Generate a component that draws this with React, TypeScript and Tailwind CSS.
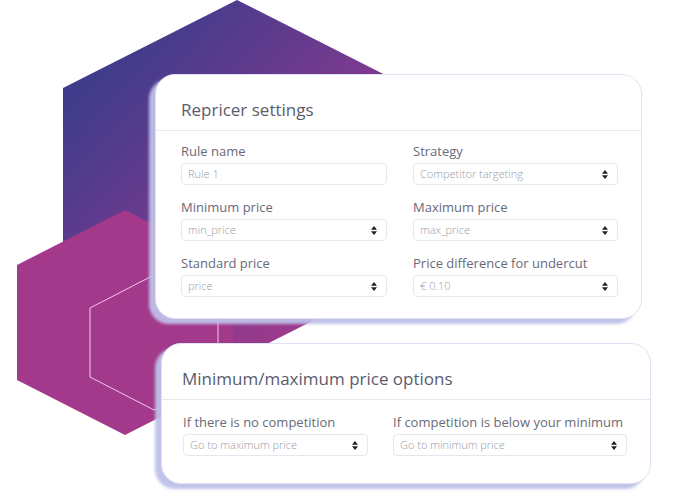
import React from 'react';

const FONT = { fontFamily: '"Open Sans", "DejaVu Sans", sans-serif' };

function Arrows() {
  return (
    <svg width="6" height="9" viewBox="0 0 6 9" className="shrink-0">
      <path d="M3 0 L6 3.8 L0 3.8 Z" fill="#1f1f24" />
      <path d="M3 9 L6 5.2 L0 5.2 Z" fill="#1f1f24" />
    </svg>
  );
}

function Field({ label, value, select = true }: { label: string; value: string; select?: boolean }) {
  return (
    <div className="flex flex-col">
      <span className="text-[13px] leading-4 text-[#6a6a78]">{label}</span>
      <div className="mt-[4px] h-[22px] rounded-[4px] border border-[#e6e6ee] flex items-center justify-between pl-[6px] pr-[9px]">
        <span className="text-[11px] font-light text-[#9a9aa6]">{value}</span>
        {select && <Arrows />}
      </div>
    </div>
  );
}

function Card({ title, className, headClass, children }: { title: string; className: string; headClass: string; children: React.ReactNode }) {
  return (
    <div className={`relative bg-white rounded-[20px] border border-[#e0e1f4] shadow-[-6px_5px_3px_rgba(190,193,232,0.95)] ${className}`}>
      <div className={`pt-[25px] pb-[10px] border-b border-[#e8e8ee] ${headClass}`}>
        <h2 className="text-[17px] leading-5 text-[#5b5b6c]">{title}</h2>
      </div>
      {children}
    </div>
  );
}

export default function App() {
  return (
    <div className="relative w-[690px] h-[500px] overflow-hidden bg-white" style={FONT}>
      {/* background hexagons */}
      <svg className="absolute inset-0" width="690" height="500" viewBox="0 0 690 500">
        <defs>
          <linearGradient id="big" x1="0.15" y1="0.15" x2="0.85" y2="0.85">
            <stop offset="0" stopColor="#3f3c8b" />
            <stop offset="0.55" stopColor="#7b3a8f" />
            <stop offset="1" stopColor="#a53a8b" />
          </linearGradient>
        </defs>
        <polygon points="237,0 411,88 411,271 237,359 63,271 63,88" fill="url(#big)" />
        <polygon points="125,210 233,265 233,380 125,435 17,380 17,265" fill="#a3398a" />
        <polygon points="154,275 218,308 218,377 154,410 90,377 90,308" fill="none" stroke="#f3c8ec" strokeWidth="1" />
      </svg>

      <div className="relative pt-[74px]">
        <Card title="Repricer settings" className="ml-[155px] w-[487px]" headClass="px-[25px]">
          <div className="grid grid-cols-[206px_205px] gap-x-[26px] gap-y-[14px] pl-[25px] pr-[23px] pt-[12px] pb-[21px]">
            <Field label="Rule name" value="Rule 1" select={false} />
            <Field label="Strategy" value="Competitor targeting" />
            <Field label="Minimum price" value="min_price" />
            <Field label="Maximum price" value="max_price" />
            <Field label="Standard price" value="price" />
            <Field label="Price difference for undercut" value="€ 0.10" />
          </div>
        </Card>

        <Card title="Minimum/maximum price options" className="mt-[24px] ml-[161px] w-[490px]" headClass="px-[20px]">
          <div className="grid grid-cols-[185px_234px] gap-x-[25px] pl-[21px] pr-[23px] pt-[14px] pb-[27px]">
            <Field label="If there is no competition" value="Go to maximum price" />
            <Field label="If competition is below your minimum" value="Go to minimum price" />
          </div>
        </Card>
      </div>
    </div>
  );
}
